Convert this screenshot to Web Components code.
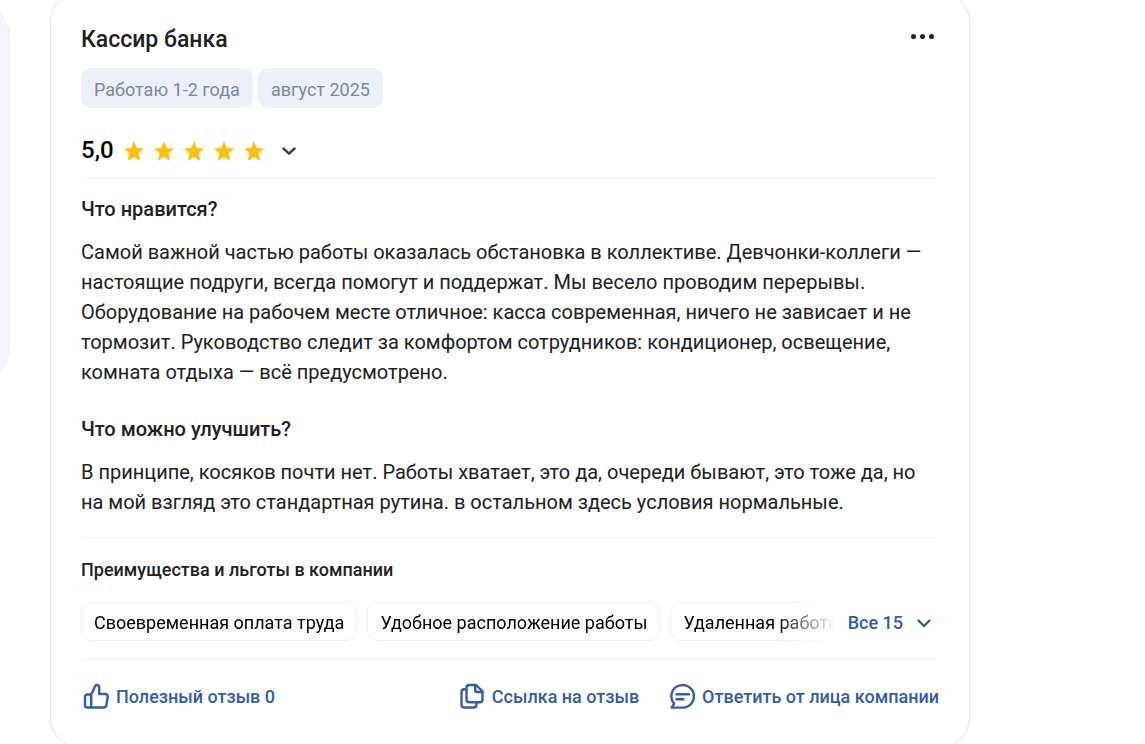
<!DOCTYPE html>
<html lang="ru">
<head>
<meta charset="utf-8">
<meta name="viewport" content="width=device-width, initial-scale=1">
<title>Отзыв: Кассир банка</title>
<style>
  html, body { margin: 0; overflow: hidden; background: #fff; }
  body { font-family: Roboto, "Liberation Sans", sans-serif; font-size: 20px; line-height: 30px; color: #212121; }
</style>
</head>
<body>
<review-page>
  <side-panel slot="aside"></side-panel>
  <review-card>
    <span slot="title">Кассир банка</span>
    <info-tag slot="tags">Работаю 1-2 года</info-tag>
    <info-tag slot="tags">август 2025</info-tag>
    <star-rating slot="rating" value="5">5,0</star-rating>
    <review-section>
      <span slot="heading">Что нравится?</span>
      Самой важной частью работы оказалась обстановка в коллективе. Девчонки-коллеги — настоящие подруги, всегда помогут и поддержат. Мы весело проводим перерывы. Оборудование на рабочем месте отличное: касса современная, ничего не зависает и не тормозит. Руководство следит за комфортом сотрудников: кондиционер, освещение, комната отдыха — всё предусмотрено.
    </review-section>
    <review-section>
      <span slot="heading">Что можно улучшить?</span>
      В принципе, косяков почти нет. Работы хватает, это да, очереди бывают, это тоже да, но на мой взгляд это стандартная рутина. в остальном здесь условия нормальные.
    </review-section>
    <benefit-list slot="benefits" total="15">
      <span slot="heading">Преимущества и льготы в компании</span>
      <benefit-chip>Своевременная оплата труда</benefit-chip>
      <benefit-chip>Удобное расположение работы</benefit-chip>
      <benefit-chip>Удаленная работа</benefit-chip>
    </benefit-list>
    <card-action slot="useful" icon="like">Полезный отзыв 0</card-action>
    <card-action slot="actions" icon="copy">Ссылка на отзыв</card-action>
    <card-action slot="actions" icon="reply">Ответить от лица компании</card-action>
  </review-card>
</review-page>

<script>
  function define(name, html, setup) {
    const template = document.createElement('template');
    template.innerHTML = html;
    customElements.define(name, class extends HTMLElement {
      constructor() {
        super();
        this.attachShadow({ mode: 'open' }).append(template.content.cloneNode(true));
      }
      connectedCallback() {
        if (setup && !this.ready) { this.ready = true; setup(this, this.shadowRoot); }
      }
    });
  }

  const icons = {
    like: '<path d="M7.500 11.500H4a2 2 0 0 0-2 2v8.700a2.300 2.300 0 0 0 2.300 2.300H20.500a3 3 0 0 0 3-2.600L24.700 13.800a2.400 2.400 0 0 0-2.400-2.800H16.200V4.600A2.600 2.600 0 0 0 13.600 2c-.7 0-1.200.4-1.500 1.100L9.200 9.600a3.200 3.200 0 0 1-1.700 1.900ZM8.200 11.200V24.500"/>',
    copy: '<path d="M7.500 6.300H5.300A2.800 2.800 0 0 0 2.500 9.100V21.700a2.800 2.800 0 0 0 2.800 2.800H14.700a2.800 2.800 0 0 0 2.800-2.800V19.800"/><path d="M10.300 2H17L23.500 8.300V16.500a2.800 2.800 0 0 1-2.800 2.800H10.300a2.800 2.800 0 0 1-2.800-2.800V4.800A2.800 2.800 0 0 1 10.300 2Z"/><path d="M16.200 2.500V7a2 2 0 0 0 2 2H23"/>',
    reply: '<path d="M13.700 24.600H2.600L5.200 20.800A11.300 11.300 0 1 1 13.700 24.600Z"/><path d="M7.500 11.300H20M7.500 16.300H14.500"/>'
  };

  define('review-page', `
    <style>
      :host { display: grid; grid-template-columns: 10px minmax(0, 1fr); column-gap: 40px; align-items: start; padding-right: 175px; }
      main { margin-top: -8px; }
    </style>
    <slot name="aside"></slot>
    <main><slot></slot></main>`);

  define('side-panel', `
    <style>
      :host { display: block; box-sizing: border-box; height: 374px; margin: 6px 0 0 -50px; border-right: 1px solid #edeff2; border-radius: 30px; background: #f4f6fc; }
    </style>`);

  define('review-card', `
    <style>
      :host { display: block; border: 1px solid #dce3eb; border-radius: 30px; padding: 30px 30px 35px; background: #fff; }
      header { display: flex; justify-content: space-between; align-items: flex-start; }
      h2 { margin: 0; font-size: 23px; line-height: 34px; font-weight: 500; }
      .menu { display: flex; gap: 4px; align-items: center; height: 26px; padding: 0 5px; border: 0; background: none; }
      .menu i { width: 5px; height: 5px; border-radius: 50%; background: #212121; }
      .tags { display: flex; flex-wrap: wrap; gap: 5px; margin: 11px 0 27px; }
      .rating { padding-bottom: 13px; border-bottom: 1px solid #f4f6fb; }
      .text { display: grid; gap: 27px; padding: 15px 0 20px; border-bottom: 1px solid #f4f6fb; }
      .benefits { padding: 20px 0 18px; border-bottom: 1px solid #f4f6fb; }
      footer { display: flex; justify-content: space-between; padding-top: 22px; }
      .actions { display: flex; gap: 28px; }
    </style>
    <article>
      <header>
        <h2><slot name="title"></slot></h2>
        <button class="menu" type="button" aria-label="Меню"><i></i><i></i><i></i></button>
      </header>
      <div class="tags"><slot name="tags"></slot></div>
      <div class="rating"><slot name="rating"></slot></div>
      <div class="text"><slot></slot></div>
      <div class="benefits"><slot name="benefits"></slot></div>
      <footer>
        <slot name="useful"></slot>
        <div class="actions"><slot name="actions"></slot></div>
      </footer>
    </article>`);

  define('info-tag', `
    <style>
      :host { display: block; padding: 7px 13px 3px; border-radius: 10px; background: #edf0f8; color: #7d8799; font-size: 18px; line-height: 30px; white-space: nowrap; }
    </style>
    <slot></slot>`);

  define('star-rating', `
    <style>
      :host { display: flex; align-items: center; height: 30px; color: #000; font-size: 24px; font-weight: 500; }
      .stars { display: flex; gap: 10px; margin: 2px 0 0 10px; }
      .stars svg { display: block; width: 20px; height: 20px; fill: #ffc107; }
      button { display: flex; margin: 2px 0 0 16px; padding: 0; border: 0; background: none; }
      button svg { width: 18px; height: 18px; fill: none; stroke: #424242; stroke-width: 2.5; stroke-linecap: round; stroke-linejoin: round; }
    </style>
    <span><slot></slot></span>
    <span class="stars"></span>
    <button type="button" aria-label="Показать оценки"><svg viewBox="0 0 18 18"><path d="M3.500 6.500 9 11.700 14.500 6.500"/></svg></button>`,
    (host, root) => {
      root.querySelector('.stars').innerHTML =
        '<svg viewBox="0 0 20 20" aria-hidden="true"><path d="M10 0 12.900 7 20 7.600 14.600 12.300 16.200 19.700 10 15.900 3.800 19.700 5.400 12.300 0 7.600 7.100 7Z"/></svg>'.repeat(Number(host.getAttribute('value')));
    });

  define('review-section', `
    <style>
      :host { display: block; }
      h3 { margin: 0 0 13px; font-size: 20px; line-height: 30px; font-weight: 500; }
      p { margin: 0; }
    </style>
    <h3><slot name="heading"></slot></h3>
    <p><slot></slot></p>`);

  define('benefit-list', `
    <style>
      :host { display: block; }
      h3 { margin: 0 0 20px; font-size: 18px; line-height: 24px; font-weight: 500; }
      .row { display: flex; align-items: center; gap: 12px; }
      .chips { display: flex; flex: 1; min-width: 0; gap: 10px; overflow: hidden; -webkit-mask-image: linear-gradient(to left, transparent, #000 60px); mask-image: linear-gradient(to left, transparent, #000 60px); }
      button { display: flex; align-items: center; gap: 12px; padding: 2px 6px 0 0; border: 0; background: none; color: #315ea5; font: inherit; font-size: 18px; font-weight: 500; line-height: 30px; white-space: nowrap; }
      svg { width: 18px; height: 18px; fill: none; stroke: currentColor; stroke-width: 2.4; stroke-linecap: round; stroke-linejoin: round; }
    </style>
    <h3><slot name="heading"></slot></h3>
    <div class="row">
      <div class="chips"><slot></slot></div>
      <button type="button"><span></span><svg viewBox="0 0 18 18" aria-hidden="true"><path d="M3.500 6.500 9 12 14.500 6.500"/></svg></button>
    </div>`,
    (host, root) => { root.querySelector('button span').textContent = 'Все ' + host.getAttribute('total'); });

  define('benefit-chip', `
    <style>
      :host { display: block; flex: none; box-sizing: border-box; height: 39px; padding: 5px 12px 4px; border: 1px solid #eff1f8; border-radius: 10px; color: #000; font-size: 18px; line-height: 30px; white-space: nowrap; }
    </style>
    <slot></slot>`);

  define('card-action', `
    <style>
      :host { display: block; }
      button { display: flex; align-items: center; gap: 7px; height: 30px; padding: 0; border: 0; background: none; color: #315ea5; font: inherit; font-size: 18px; font-weight: 500; white-space: nowrap; }
      svg { width: 28px; height: 28px; fill: none; stroke: currentColor; stroke-width: 2.400; stroke-linecap: round; stroke-linejoin: round; }
    </style>
    <button type="button"><svg viewBox="-2 0 28 28" aria-hidden="true"></svg><span><slot></slot></span></button>`,
    (host, root) => { root.querySelector('svg').innerHTML = icons[host.getAttribute('icon')]; });
</script>
</body>
</html>
